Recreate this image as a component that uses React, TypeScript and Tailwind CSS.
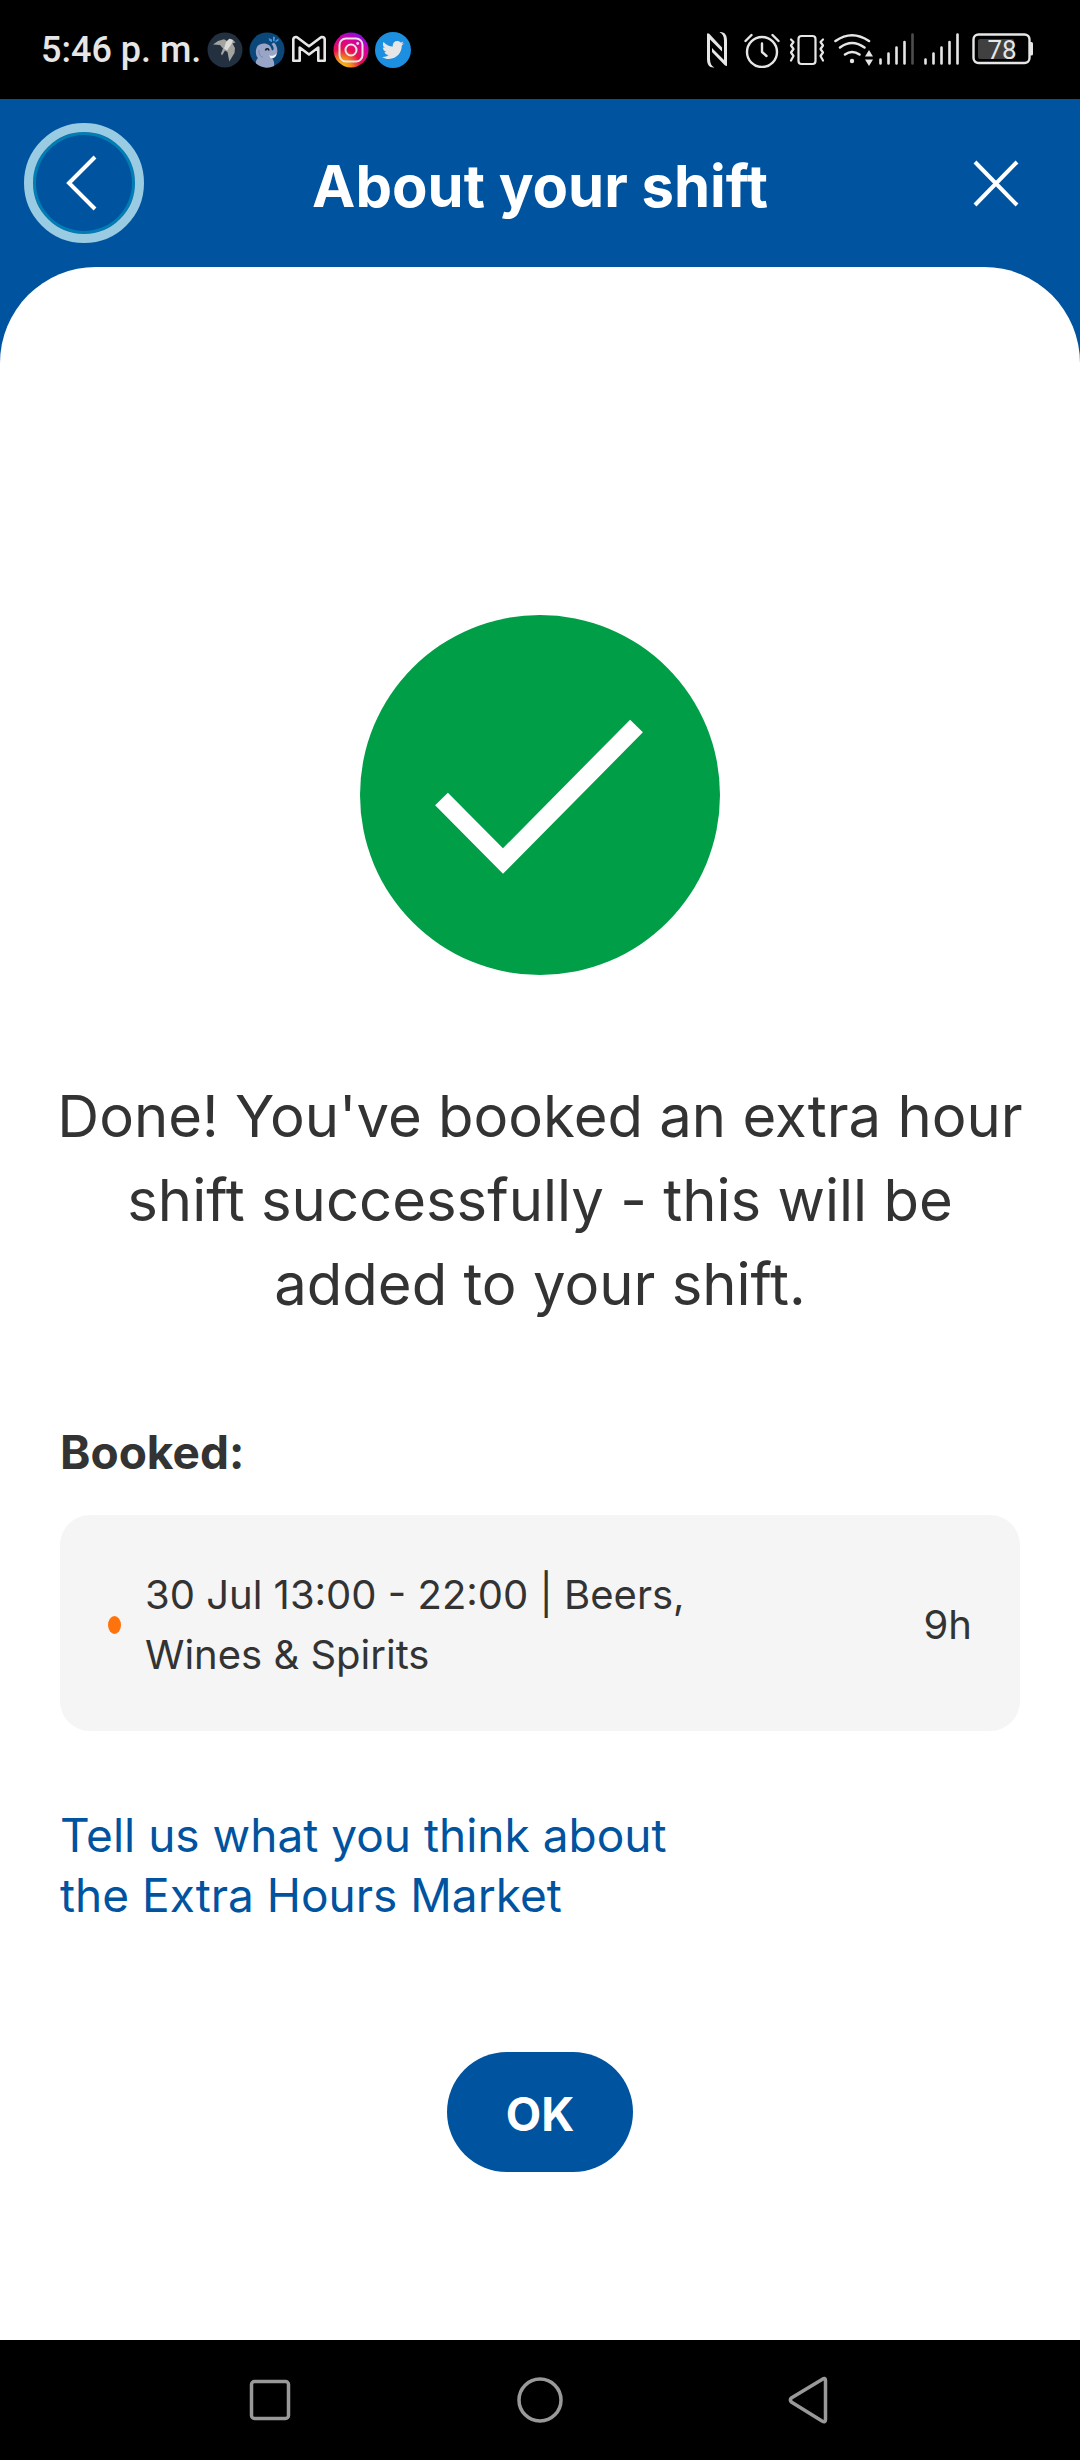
import { FaTwitter } from 'react-icons/fa';

interface Shift {
  id: string;
  label: string;
  duration: string;
}

const bookedShifts: Shift[] = [
  { id: 'beers-wines', label: '30 Jul 13:00 - 22:00 | Beers, Wines & Spirits', duration: '9h' },
];

function BirdIcon() {
  return (
    <svg className="size-9" viewBox="0 0 36 36" aria-hidden="true">
      <circle cx="18" cy="18" r="17.5" fill="#23303f" />
      <path d="M6 12.5 L11 9 L17 7.2 L20 9 L22.5 6.8 L26 8 L28.5 10.5 L25.5 11.5 L28 16 L27.5 21 L22.3 29.5 L20.5 20 L18 18.5 L15 23.5 L14 21.5 L16 16.5 L13 13 Z" fill="#a3a3a0" />
      <path d="M19 10 L22.5 6.8 L26 8 L24.5 12 L20 18.5 L17 16.5 Z" fill="#dcdad6" />
    </svg>
  );
}

function ElephantIcon() {
  return (
    <svg className="size-9" viewBox="0 0 36 36" aria-hidden="true">
      <circle cx="18" cy="18" r="17.5" fill="#0c477a" />
      <path d="M7 31.5 C6.5 29 8 27 9 26 C6.5 24 6 18 8.5 14 C11 11 17 10.5 20 13 C22 14.5 22.5 17 23 18.5 C25 18.5 25.5 15.5 22.5 12 L25 10.5 C28.5 14 29.5 20 27 23.5 C26 25 24 26 23 26 C25 28.5 25.5 31.5 25 34 A17.5 17.5 0 0 1 7 31.5 Z" fill="#98a5c6" />
      <path d="M20 23 C22 24.5 25 24 27.5 21.5 C27.5 25 24 27 21.5 26 Z" fill="#f2f2f2" />
      <path d="M16.5 18.5 C17 16 19.5 16 20 18.5" fill="none" stroke="#101820" strokeWidth="1.5" />
      <path d="M10 18 C9.5 22 11.5 25 14 25" fill="none" stroke="#7686ab" strokeWidth="1" />
      <path d="M19.5 6 L23 7.5 L23 10 L20.5 9 Z M24 4.5 L26 5 L25.5 9.5 L24 9 Z M29.5 6.5 L29.5 8.5 L26.5 10.5 L26.5 8.5 Z" fill="#3f9be8" />
    </svg>
  );
}

function MailIcon() {
  return (
    <svg className="size-9" viewBox="0 0 36 36" fill="none" stroke="#e6e6e6" strokeWidth="2.6" strokeLinejoin="round" aria-hidden="true">
      <path d="M2.3 7.5 Q2.3 5 5 5 L6 5.3 L18 14.2 L30 5.3 L31 5 Q33.7 5 33.7 7.5 V28.7 H27.3 V15.5 L18 22.5 L8.7 15.5 V28.7 H2.3 Z" />
    </svg>
  );
}

function InstagramIcon() {
  return (
    <svg className="size-9" viewBox="0 0 36 36" fill="none" aria-hidden="true">
      <defs>
        <radialGradient id="insta" cx="0.25" cy="1" r="1.05">
          <stop offset="0" stopColor="#f5c518" />
          <stop offset="0.25" stopColor="#f28a1c" />
          <stop offset="0.5" stopColor="#e8104f" />
          <stop offset="0.8" stopColor="#d800a0" />
          <stop offset="1" stopColor="#8a10e0" />
        </radialGradient>
      </defs>
      <circle cx="18" cy="18" r="17.5" fill="url(#insta)" />
      <rect x="6.5" y="6.5" width="23" height="23" rx="6.5" stroke="#e6e6e6" strokeWidth="2" />
      <circle cx="18" cy="18" r="5.5" stroke="#e6e6e6" strokeWidth="2" />
      <circle cx="24.7" cy="11.5" r="1.4" fill="#e6e6e6" />
    </svg>
  );
}

function NfcIcon() {
  return (
    <svg className="h-[37px] w-7" viewBox="0 0 28 37" fill="none" aria-hidden="true">
      <path d="M6.5 36.5 C2 36.5 0 33 0 28 V2.5 L2 2.5 L15 16.5 V20.5 L3 8.5 V28 C3 32.5 4.5 35 7.5 36.5 Z" fill="#e6e6e6" />
      <path d="M13.5 1 C18 1 20 4.5 20 9.5 V35 L18 34.5 L5 21 V17 L17 29 V9.5 C17 5 15.5 2.5 12.5 1.2 Z" fill="#e6e6e6" />
    </svg>
  );
}

function AlarmIcon() {
  return (
    <svg className="h-[37px] w-9" viewBox="0 0 36 37" fill="none" stroke="#e6e6e6" strokeWidth="2.4" strokeLinecap="round" strokeLinejoin="round" aria-hidden="true">
      <circle cx="18" cy="21" r="15" />
      <path d="M18 12.5 V21 L22.5 25" />
      <path d="M1.5 10 L7.5 4 M34.5 10 L28.5 4" />
    </svg>
  );
}

function VibrateIcon() {
  return (
    <svg className="h-[37px] w-9" viewBox="0 0 36 37" fill="none" stroke="#e6e6e6" strokeWidth="2.2" strokeLinecap="round" strokeLinejoin="round" aria-hidden="true">
      <rect x="9.5" y="5" width="17" height="28" rx="3" />
      <path d="M2 8.5 L4.5 11 L2 14.5 L4.5 18 L2 21.5 L4.5 25 L2 29.5" />
      <path d="M34 8.5 L31.5 11 L34 14.5 L31.5 18 L34 21.5 L31.5 25 L34 29.5" />
    </svg>
  );
}

// wifi fan with the traffic arrows and the first SIM's bars
function WifiSignalIcon() {
  return (
    <svg className="h-[37px] w-[81px]" viewBox="0 0 81 37" fill="none" stroke="#e6e6e6" strokeWidth="2.6" strokeLinecap="round" aria-hidden="true">
      <path d="M1.5 10 Q18 -1.5 35 10" />
      <path d="M6 16.5 Q18 7.5 30.5 16.5" />
      <path d="M11 23.5 Q18 18.5 25.5 23.5" />
      <circle cx="18" cy="30" r="2.2" fill="#e6e6e6" stroke="none" />
      <path d="M35 19 L39 25.5 H31 Z M35 35 L39 28.5 H31 Z" fill="#e6e6e6" stroke="none" />
      <path d="M46.5 28.5 V32.5 M54.5 22.5 V32.5 M62.5 16.5 V32.5 M70.5 11 V32.5" />
      <path d="M78.5 3.5 V32.5" stroke="#4d4d4d" />
    </svg>
  );
}

function SignalIcon() {
  return (
    <svg className="h-[37px] w-[39px]" viewBox="0 0 39 37" fill="none" stroke="#e6e6e6" strokeWidth="2.6" strokeLinecap="round" aria-hidden="true">
      <path d="M1.5 28.5 V32.5 M9.5 22.5 V32.5 M17.5 16.5 V32.5 M25.5 11 V32.5 M33.5 3.5 V32.5" />
    </svg>
  );
}

function BatteryIcon() {
  return (
    <svg className="h-[37px] w-[61px]" viewBox="0 0 61 37" fill="none">
      <rect x="1.5" y="3.5" width="56" height="28.5" rx="5" stroke="#e6e6e6" strokeWidth="2.4" />
      <rect x="6" y="8" width="36" height="20" rx="2" fill="#404040" />
      <path d="M58 11 H59.5 Q61 11 61 12.5 V23 Q61 24.5 59.5 24.5 H58 Z" fill="#e6e6e6" />
      <text x="30" y="28" textAnchor="middle" fill="#e6e6e6" className="font-['Roboto',sans-serif] text-[26px]">78</text>
    </svg>
  );
}

export default function App() {
  return (
    <div className="min-h-screen bg-[#00539f] font-['Inter',sans-serif] text-[#333333]">
      {/* Status bar */}
      <div className="flex h-[99px] items-center justify-between bg-black pr-[47px] pl-[41px]">
        <div className="flex items-center gap-1.5">
          <span className="font-['Roboto',sans-serif] text-[36px] leading-[48px] font-medium text-[#e6e6e6]">5:46 p. m.</span>
          <BirdIcon />
          <ElephantIcon />
          <MailIcon />
          <InstagramIcon />
          <span className="flex size-9 items-center justify-center rounded-full bg-[#1d8fe0]">
            <FaTwitter className="size-[22px] text-[#e6e6e6]" />
          </span>
        </div>
        <div className="flex items-center gap-[9px]">
          <NfcIcon />
          <AlarmIcon />
          <VibrateIcon />
          <WifiSignalIcon />
          <SignalIcon />
          <BatteryIcon />
        </div>
      </div>

      {/* Header */}
      <header className="grid h-[168px] grid-cols-[120px_1fr_120px] items-center px-6">
        <button
          type="button"
          aria-label="Back"
          className="flex size-[120px] items-center justify-center rounded-full border-[9px] border-[#99cbe2] shadow-[inset_0_0_0_3px_#007eb3]"
        >
          <svg className="h-14 w-9" viewBox="0 0 36 56" fill="none" stroke="white" strokeWidth="4" aria-hidden="true">
            <path d="M29 2 L3 28 L29 54" />
          </svg>
        </button>
        <h1 className="pt-1.5 text-center text-[58px] leading-[84px] font-bold text-white">About your shift</h1>
        <button type="button" aria-label="Close" className="flex size-[120px] items-center justify-center">
          <svg className="size-12" viewBox="0 0 48 48" fill="none" stroke="white" strokeWidth="4" aria-hidden="true">
            <path d="M3 3 L45 46 M45 3 L3 46" />
          </svg>
        </button>
      </header>

      {/* Confirmation */}
      <main className="rounded-t-[96px] bg-white px-10 pt-[348px] pb-[168px]">
        <svg className="mx-auto size-[360px]" viewBox="0 0 360 360" fill="none" role="img" aria-label="Success">
          <circle cx="180" cy="180" r="180" fill="#009e47" />
          <path d="M81.5 184 L143 246 L276.5 111" stroke="white" strokeWidth="18" />
        </svg>
        <p className="mt-[99px] text-center text-[58px] leading-[84px]">
          Done! You've booked an extra hour shift successfully - this will be added to your shift.
        </p>

        <div className="px-5">
          <h2 className="mt-24 text-[46px] leading-[60px] font-bold">Booked:</h2>
          <ul className="mt-[33px]">
            {bookedShifts.map((shift) => (
              <li key={shift.id} className="flex items-center gap-6 rounded-[30px] bg-[#f5f5f5] px-12 pt-[50px] pb-[46px] text-[40px] leading-[60px]">
                <span className="h-[18px] w-[13px] rounded-[50%] bg-[#ff730c]" />
                <span className="max-w-[580px]">{shift.label}</span>
                <span className="ml-auto">{shift.duration}</span>
              </li>
            ))}
          </ul>

          <a href="#feedback" className="mt-[74px] block max-w-[640px] text-[46px] leading-[60px] text-[#00539f]">
            Tell us what you think about the Extra Hours Market
          </a>
        </div>

        <button type="button" className="mx-auto mt-[127px] block h-[120px] w-[186px] rounded-full bg-[#00539f] pt-1 text-[46px] leading-[60px] font-bold text-white">
          OK
        </button>
      </main>

      {/* Android navigation */}
      <nav className="grid h-[120px] grid-cols-3 items-center justify-items-center bg-black px-[135px]">
        <button type="button" aria-label="Recent apps">
          <svg className="size-12" viewBox="0 0 48 48" fill="none" stroke="#999999" strokeWidth="3.5" aria-hidden="true">
            <rect x="5.5" y="5.5" width="37" height="37" rx="3" />
          </svg>
        </button>
        <button type="button" aria-label="Home">
          <svg className="size-12" viewBox="0 0 48 48" fill="none" stroke="#999999" strokeWidth="3.5" aria-hidden="true">
            <circle cx="24" cy="24" r="21" />
          </svg>
        </button>
        <button type="button" aria-label="Back to previous app">
          <svg className="size-12" viewBox="0 0 48 48" fill="none" stroke="#999999" strokeWidth="3.5" strokeLinejoin="round" aria-hidden="true">
            <path d="M5.3 22 Q3.5 24 5.3 26 L36 45 Q39.5 47 39.5 43.5 V4.5 Q39.5 1 36 3.5 Z" />
          </svg>
        </button>
      </nav>
    </div>
  );
}
